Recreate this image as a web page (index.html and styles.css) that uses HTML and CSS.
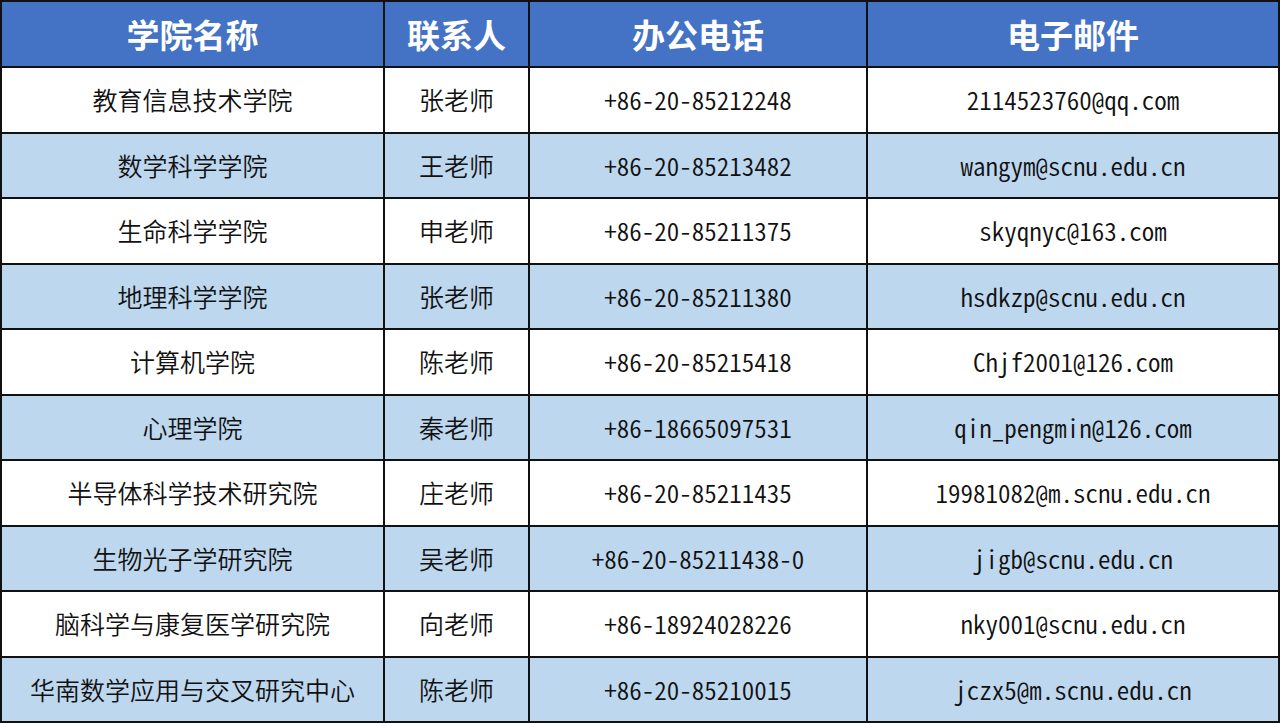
FILE: index.html
```html
<!DOCTYPE html>
<html lang="zh-CN">
<head>
<meta charset="utf-8">
<link rel="stylesheet" href="styles.css">
</head>
<body>
<table class="contacts">
  <colgroup>
    <col class="c1"><col class="c2"><col class="c3"><col class="c4">
  </colgroup>
  <thead>
    <tr><th>学院名称</th><th>联系人</th><th>办公电话</th><th>电子邮件</th></tr>
  </thead>
  <tbody>
    <tr><td>教育信息技术学院</td><td>张老师</td><td>+86-20-85212248</td><td>2114523760@qq.com</td></tr>
    <tr class="alt"><td>数学科学学院</td><td>王老师</td><td>+86-20-85213482</td><td>wangym@scnu.edu.cn</td></tr>
    <tr><td>生命科学学院</td><td>申老师</td><td>+86-20-85211375</td><td>skyqnyc@163.com</td></tr>
    <tr class="alt"><td>地理科学学院</td><td>张老师</td><td>+86-20-85211380</td><td>hsdkzp@scnu.edu.cn</td></tr>
    <tr><td>计算机学院</td><td>陈老师</td><td>+86-20-85215418</td><td>Chjf2001@126.com</td></tr>
    <tr class="alt"><td>心理学院</td><td>秦老师</td><td>+86-18665097531</td><td>qin_pengmin@126.com</td></tr>
    <tr><td>半导体科学技术研究院</td><td>庄老师</td><td>+86-20-85211435</td><td>19981082@m.scnu.edu.cn</td></tr>
    <tr class="alt"><td>生物光子学研究院</td><td>吴老师</td><td>+86-20-85211438-0</td><td>jigb@scnu.edu.cn</td></tr>
    <tr><td>脑科学与康复医学研究院</td><td>向老师</td><td>+86-18924028226</td><td>nky001@scnu.edu.cn</td></tr>
    <tr class="alt"><td>华南数学应用与交叉研究中心</td><td>陈老师</td><td>+86-20-85210015</td><td>jczx5@m.scnu.edu.cn</td></tr>
  </tbody>
</table>
</body>
</html>
```

FILE: styles.css
```css
html, body {
  margin: 0;
  padding: 0;
  background: #ffffff;
}
body {
  font-family: "Noto Sans CJK SC", "Noto Sans", sans-serif;
  font-feature-settings: "hwid" 1;
}
.contacts {
  border-collapse: collapse;
  table-layout: fixed;
  width: 1278px;
}
.c1 { width: 383px; }
.c2 { width: 145px; }
.c3 { width: 338px; }
.c4 { width: 412px; }
.contacts th,
.contacts td {
  border: 2px solid #111111;
  text-align: center;
  vertical-align: middle;
  padding: 0;
  white-space: nowrap;
}
.contacts thead tr { height: 66px; }
.contacts th {
  background: #4472c4;
  color: #ffffff;
  font-size: 33px;
  font-weight: 700;
  line-height: 1;
}
.contacts tbody tr { height: 65.5px; }
.contacts td {
  font-size: 25px;
  font-weight: 350;
  color: #111111;
  line-height: 1;
  background: #ffffff;
}
.contacts tr.alt td {
  background: #bdd7ee;
}
```
